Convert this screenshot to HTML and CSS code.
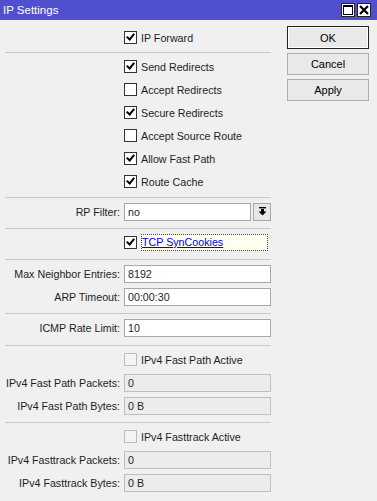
FILE: index.html
```html
<!DOCTYPE html>
<html lang="en">
<head>
    <meta charset="UTF-8">
    <title>IP Settings</title>
    <link rel="stylesheet" href="styles.css">
</head>
<body>
    <div class="window">
        <div class="titlebar">
            <span class="title">IP Settings</span>
            <div class="ctrls">
                <span class="ctrl"><svg width="10" height="10" viewBox="0 0 10 10"><rect x="0.5" y="0.5" width="9" height="9" fill="none" stroke="#000"/><rect x="0" y="0" width="10" height="2" fill="#000"/></svg></span>
                <span class="ctrl"><svg width="10" height="10" viewBox="0 0 10 10"><path d="M1 1 L9 9 M9 1 L1 9" stroke="#000" stroke-width="2.2"/></svg></span>
            </div>
        </div>

        <div class="content">
            <div class="form">
                <div class="row"><span></span><span class="opt"><i class="cb on"></i>IP Forward</span></div>
                <div class="sep first"></div>

                <div class="row"><span></span><span class="opt"><i class="cb on"></i>Send Redirects</span></div>
                <div class="row"><span></span><span class="opt"><i class="cb"></i>Accept Redirects</span></div>
                <div class="row"><span></span><span class="opt"><i class="cb on"></i>Secure Redirects</span></div>
                <div class="row"><span></span><span class="opt"><i class="cb"></i>Accept Source Route</span></div>
                <div class="row"><span></span><span class="opt"><i class="cb on"></i>Allow Fast Path</span></div>
                <div class="row"><span></span><span class="opt"><i class="cb on"></i>Route Cache</span></div>
                <div class="sep second"></div>

                <div class="row">
                    <span class="lbl">RP Filter:</span>
                    <span class="combo">
                        <span class="input">no</span>
                        <span class="drop"><svg width="9" height="9" viewBox="0 0 9 9"><rect x="1" y="0" width="7" height="1.4" fill="#000"/><rect x="3" y="2" width="3" height="3" fill="#000"/><path d="M0.5 4.5 H8.5 L4.5 8.5 Z" fill="#000"/></svg></span>
                    </span>
                </div>
                <div class="sep"></div>

                <div class="row"><span></span><span class="opt"><i class="cb on"></i><span class="focus">TCP SynCookies</span></span></div>
                <div class="sep"></div>

                <div class="row"><span class="lbl">Max Neighbor Entries:</span><span class="input">8192</span></div>
                <div class="row"><span class="lbl">ARP Timeout:</span><span class="input">00:00:30</span></div>
                <div class="sep"></div>

                <div class="row"><span class="lbl">ICMP Rate Limit:</span><span class="input">10</span></div>
                <div class="sep wide"></div>

                <div class="row"><span></span><span class="opt"><i class="cb off"></i>IPv4 Fast Path Active</span></div>
                <div class="row"><span class="lbl">IPv4 Fast Path Packets:</span><span class="input ro">0</span></div>
                <div class="row"><span class="lbl">IPv4 Fast Path Bytes:</span><span class="input ro">0 B</span></div>
                <div class="sep"></div>

                <div class="row"><span></span><span class="opt"><i class="cb off"></i>IPv4 Fasttrack Active</span></div>
                <div class="row"><span class="lbl">IPv4 Fasttrack Packets:</span><span class="input ro">0</span></div>
                <div class="row"><span class="lbl">IPv4 Fasttrack Bytes:</span><span class="input ro">0 B</span></div>
            </div>

            <div class="side">
                <button class="btn default">OK</button>
                <button class="btn">Cancel</button>
                <button class="btn">Apply</button>
            </div>
        </div>
    </div>
</body>
</html>
```

FILE: styles.css
```css
body {
    margin: 0;
    font-family: 'Liberation Sans', Arial, sans-serif;
    font-size: 10.7px;
    color: #1e1e1e;
    background-color: #f0f0f0;
}

.window {
    width: 377px;
    height: 501px;
    background-color: #f0f0f0;
}

.titlebar {
    height: 20px;
    background-color: #5050cf;
    display: flex;
    align-items: center;
    justify-content: space-between;
    padding: 0 6px 0 3px;
}

.title {
    color: #fff;
    font-size: 11.5px;
}

.ctrls {
    display: flex;
    gap: 2px;
}

.ctrl {
    width: 14px;
    height: 14px;
    box-sizing: border-box;
    background-color: #fff;
    border: 1px solid #222;
    display: flex;
    align-items: center;
    justify-content: center;
}

.content {
    display: flex;
    padding-top: 6px;
}

.form {
    width: 266px;
    margin-left: 5px;
}

.row {
    display: grid;
    grid-template-columns: 115px 147px;
    column-gap: 4px;
    align-items: center;
    height: 23px;
}

.lbl {
    justify-self: end;
    white-space: nowrap;
}

.opt {
    display: flex;
    align-items: center;
    gap: 4px;
    white-space: nowrap;
}

.cb {
    width: 13px;
    height: 13px;
    box-sizing: border-box;
    border: 1px solid #333;
    background-color: #fff;
    display: inline-block;
    position: relative;
    flex: none;
}

.cb.on::after {
    content: '';
    position: absolute;
    left: 3px;
    top: 0px;
    width: 3px;
    height: 6px;
    border: solid #000;
    border-width: 0 2px 2px 0;
    transform: rotate(40deg);
}

.cb.off {
    border-color: #bcbcbc;
    background-color: #f4f4f4;
}

.focus {
    flex: 1;
    color: #0000e0;
    text-decoration: underline;
    border: 1px dotted #444;
    background-color: #fffff0;
    padding: 1px 0;
    line-height: 13px;
    margin-right: 3px;
}

.input {
    height: 18px;
    box-sizing: border-box;
    border: 1px solid #a8a8a8;
    background-color: #fff;
    padding: 0 3px;
    line-height: 16px;
    white-space: nowrap;
}

.input.ro {
    background-color: #ececec;
    border-color: #bfbfbf;
}

.combo {
    display: flex;
    gap: 2px;
}

.combo .input {
    flex: 1;
}

.drop {
    width: 18px;
    height: 18px;
    box-sizing: border-box;
    border: 1px solid #a8a8a8;
    background-color: #e8e8e8;
    display: flex;
    align-items: center;
    justify-content: center;
}

.sep {
    height: 1px;
    background-color: #c8c8c8;
    margin: 5px 0 2px;
}

.sep.first {
    margin-top: 3px;
}

.sep.second {
    margin-top: 4px;
}

.sep.wide {
    margin-top: 6px;
}

.side {
    display: flex;
    flex-direction: column;
    gap: 4px;
    margin-left: 16px;
}

.btn {
    width: 82px;
    height: 22px;
    font-family: 'Liberation Sans', Arial, sans-serif;
    font-size: 11px;
    color: #000;
    background-color: #e9e9e9;
    border: 1px solid #adadad;
    padding: 0;
}

.btn.default {
    border: 1px solid #222;
    box-shadow: inset 0 0 0 1px #fff;
    height: 23px;
}
```
